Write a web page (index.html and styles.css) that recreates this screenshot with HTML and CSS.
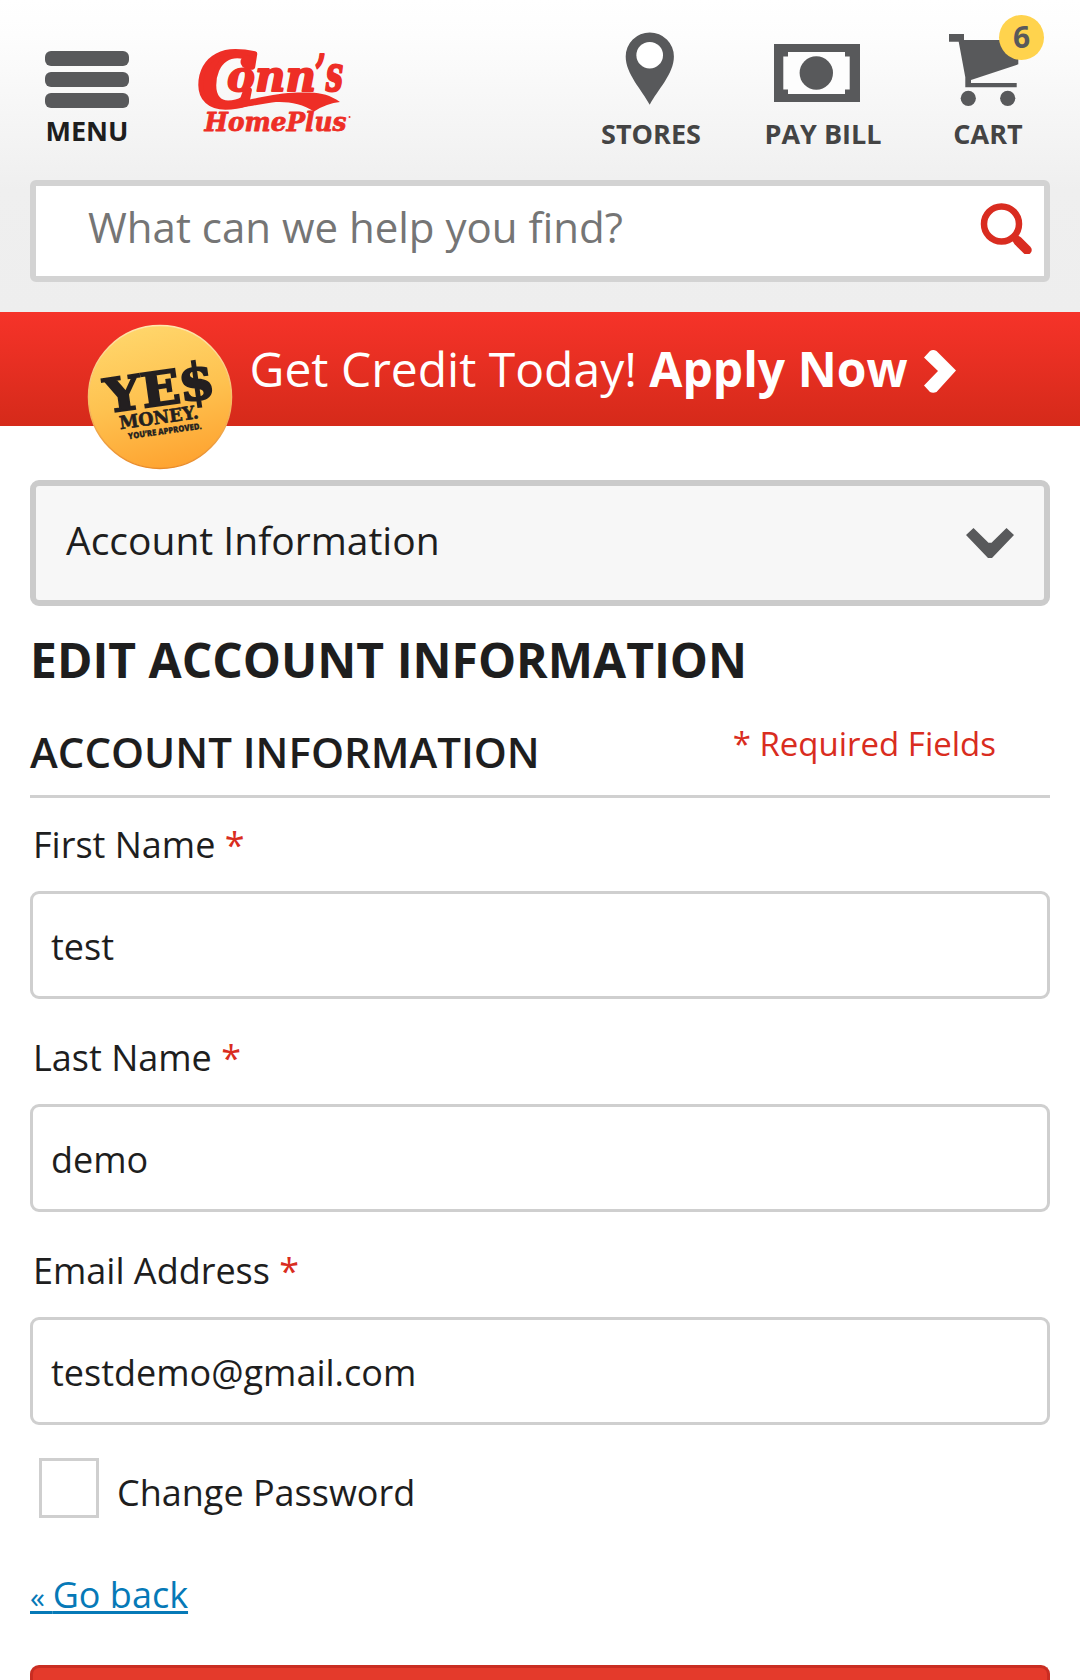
FILE: index.html
```html
<!DOCTYPE html>
<html lang="en">
<head>
<meta charset="utf-8">
<title>Edit Account Information</title>
<link rel="stylesheet" href="styles.css">
</head>
<body>
<header class="header">
  <div class="topbar">
    <a class="menu">
      <span class="bars"><span class="bar"></span><span class="bar"></span><span class="bar"></span></span>
      <span class="menu-label">MENU</span>
    </a>
    <svg class="logo" width="190" height="105" viewBox="0 0 190 105" fill="#ee2e26" stroke="#ee2e26" stroke-linejoin="round">
      <text class="logo-script" x="18" y="70.500" font-size="82" stroke-width="5" textLength="56" lengthAdjust="spacingAndGlyphs">C</text>
      <circle cx="67" cy="27" r="6.500" stroke="none"/>
      <text class="logo-slab" x="47" y="55.500" font-size="43" stroke-width="1.800" textLength="89" lengthAdjust="spacingAndGlyphs">onn</text>
      <text class="logo-slab" x="135" y="55.500" font-size="50" stroke-width="2" textLength="28" lengthAdjust="spacingAndGlyphs">’s</text>
      <path stroke="none" d="M28 64C40 72 62 66 82 62C100 58 114 57 130 57.500C142 58 150 60 160 67Q147 68 134 76.500C122 68.500 106 66 92 67.500C76 69.500 64 73.500 46 73.500Q34 73 28 64Z"/>
      <text class="logo-slab" x="24.500" y="95.500" font-size="25.500" stroke-width=".8" textLength="142" lengthAdjust="spacingAndGlyphs">HomePlus</text>
      <circle cx="169.500" cy="82" r="1" stroke="none"/>
    </svg>
    <nav class="links">
      <a class="link link-stores">
        <svg width="100" height="119" viewBox="601 0 100 119"><path fill="#58595b" d="M649.700 104.700C642 90 625.700 74 625.700 56.500A24 24 0 0 1 673.900 56.500C673.900 74 657.500 90 649.700 104.700Z"/><circle cx="649.700" cy="55.200" r="13.300" fill="#fff"/></svg>
        <span>STORES</span>
      </a>
      <a class="link link-pay">
        <svg width="120" height="119" viewBox="763 0 120 119"><path fill="#58595b" d="M774 44H860V102H774Z"/><path fill="#fdfdfd" d="M788 52H845V56.500H849.700V89.500H845V94H788V89.500H783.300V56.500H788Z"/><circle cx="816.300" cy="73" r="16.700" fill="#58595b"/></svg>
        <span>PAY BILL</span>
      </a>
      <a class="link link-cart">
        <svg width="100" height="119" viewBox="938 0 100 119" fill="#58595b"><path d="M949 34H964V40H1018.300V64.300L971 80V83H1016.700V87.300H965.300V77.300L958.700 41.700H949Z"/><circle cx="968.300" cy="98.300" r="7.600"/><circle cx="1007.700" cy="98.300" r="7.600"/></svg>
        <span>CART</span>
        <b class="badge">6</b>
      </a>
    </nav>
  </div>
  <div class="search">
    <span>What can we help you find?</span>
    <svg width="54" height="54" viewBox="979 200 54 54" fill="none" stroke="#d92c20"><circle cx="1001.500" cy="224" r="17.500" stroke-width="6.500"/><path d="M1014 237L1023 246" stroke-width="8"/><path d="M1018 241L1027 250" stroke-width="9.500" stroke-linecap="round"/></svg>
  </div>
</header>
<div class="banner">
  <svg class="coin" width="146" height="146" viewBox="0 0 146 146">
    <defs><linearGradient id="gold" x1=".35" y1="0" x2=".6" y2="1"><stop offset="0" stop-color="#ffd66b"/><stop offset=".5" stop-color="#fec250"/><stop offset="1" stop-color="#fea330"/></linearGradient>
    <linearGradient id="rim" x1="0" y1="0" x2="0" y2="1"><stop offset="0" stop-color="#ffe6ae"/><stop offset=".6" stop-color="#f4b65a"/><stop offset="1" stop-color="#e98b2a"/></linearGradient></defs>
    <circle cx="73" cy="73" r="71.500" fill="url(#gold)" stroke="url(#rim)" stroke-width="1.500"/>
    <g fill="#231f20" stroke="#231f20" transform="rotate(-8 30 90)">
      <text class="coin-slab" x="20" y="87.500" font-size="47" stroke-width="1.800" textLength="76" lengthAdjust="spacingAndGlyphs">YE</text>
      <text class="coin-slab" x="95" y="87" font-size="51" stroke-width="1.800" textLength="36" lengthAdjust="spacingAndGlyphs">$</text>
      <text class="coin-slab" x="31" y="105.500" font-size="18" stroke-width=".6" textLength="80" lengthAdjust="spacingAndGlyphs">MONEY.</text>
      <text class="coin-sans" x="38" y="116.500" font-size="8.500" stroke-width=".3" textLength="74" lengthAdjust="spacingAndGlyphs">YOU’RE APPROVED.</text>
    </g>
  </svg>
  <span class="banner-text">Get Credit Today! <b>Apply Now</b></span>
  <svg width="32" height="43" viewBox="0 0 32 43"><path fill="#fff" d="M0 7.500L6 1Q9 -1 12.500 1L32 20.500L12.500 42Q9 43.500 6 42L0 35.500L14 21Z"/></svg>
</div>
<main class="content">
  <div class="select">
    <span>Account Information</span>
    <svg width="48" height="30" viewBox="0 0 48 30"><path fill="#58595b" d="M0 7L7.500 0L22.500 14.700H25.500L40.500 0L48 7L26 30H22Z"/></svg>
  </div>
  <h1 class="title">EDIT ACCOUNT INFORMATION</h1>
  <div class="section-head">
    <h2 class="subtitle">ACCOUNT INFORMATION</h2>
    <p class="required">* Required Fields</p>
  </div>
  <form class="form">
    <div class="field"><label class="label">First Name <em>*</em></label><div class="input">test</div></div>
    <div class="field"><label class="label">Last Name <em>*</em></label><div class="input">demo</div></div>
    <div class="field"><label class="label">Email Address <em>*</em></label><div class="input">testdemo@gmail.com</div></div>
    <div class="check"><span class="box"></span><span class="check-label">Change Password</span></div>
    <a class="back"><small>« </small>Go back</a>
    <div class="save"></div>
  </form>
</main>
</body>
</html>
```
FILE: styles.css
```css
* { box-sizing: border-box; }
body {
  margin: 0;
  height: 1680px;
  overflow: hidden;
  background: #fff;
  color: #1e1e1e;
  font-family: "Open Sans", sans-serif;
}
svg { display: block; flex: none; }

.header {
  height: 312px;
  padding: 0 30px;
  background: linear-gradient(#fff 0, #fdfdfd 36px, #efefef 190px, #eee 312px);
}
.topbar { display: flex; height: 180px; }
.menu { display: flex; flex-direction: column; width: 84px; margin: 51px 0 0 15px; align-items: center; }
.bars { display: flex; flex-direction: column; gap: 6px; width: 84px; }
.bar { height: 15px; border-radius: 6px; background: #58595b; }
.menu-label { margin-top: 8px; line-height: 30px; font-size: 27px; font-weight: 700; }
.logo { margin: 35px 0 0 51px; overflow: visible; }
.logo-script { font-family: "Liberation Serif", serif; font-weight: 700; font-style: italic; }
.logo-slab { font-family: "DejaVu Serif", serif; font-weight: 700; font-style: italic; }
.links { display: flex; margin-left: 231px; }
.link { position: relative; display: flex; flex-direction: column; align-items: center; color: #444; font-size: 27px; font-weight: 700; line-height: 30px; white-space: nowrap; }
.link-stores { width: 100px; }
.link-pay { width: 120px; margin-left: 62px; }
.link-cart { width: 100px; margin-left: 55px; }
.badge {
  position: absolute; left: 61px; top: 15px; width: 45px; height: 45px;
  border-radius: 50%; background: #ffd34d; color: #58595b;
  font-size: 30px; font-weight: 700; line-height: 44px; text-align: center;
}
.search {
  display: flex; justify-content: space-between; height: 102px; padding: 14px 11px 0 52px;
  border: 6px solid #d3d3d3; border-radius: 6px; background: #fff;
  color: #757575; font-size: 42px; line-height: 54px;
}
.banner {
  position: relative; display: flex; height: 114px; padding: 38px 0 0 249.500px;
  background: linear-gradient(#f63329, #d52a1a); color: #fff;
}
.banner-text { margin-right: 17px; font-size: 48px; line-height: 38px; white-space: nowrap; }
.coin { position: absolute; left: 87px; top: 12px; }
.coin-slab { font-family: "DejaVu Serif", serif; font-weight: 700; }
.coin-sans { font-family: "Open Sans", sans-serif; font-weight: 800; }

.content { padding: 54px 30px 0; }
.select {
  display: flex; justify-content: space-between; height: 126px; padding: 42px 30px 0;
  border: 6px solid #cbcbcb; border-radius: 9px; background: #f7f7f7;
  font-size: 39px; line-height: 24px;
}
.title { margin: 24px 0 0; font-size: 48px; font-weight: 700; line-height: 60px; white-space: nowrap; }
.section-head {
  display: flex; justify-content: space-between; height: 108px; padding: 32px 54px 0 0;
  border-bottom: 3px solid #d0d0d0;
}
.subtitle { margin: 3px 0 0; font-size: 42px; font-weight: 600; line-height: 54px; }
.required { margin: 0; color: #d92c20; font-size: 33px; line-height: 44px; }
.form { display: flex; flex-direction: column; padding-top: 23px; font-size: 36px; }
.field { height: 213px; }
.label { display: block; padding-left: 3px; line-height: 48px; }
.label em { color: #d92c20; font-style: normal; }
.input {
  height: 108px; margin-top: 22px; padding: 2px 18px 0;
  border: 3px solid #cfcfcf; border-radius: 9px; line-height: 102px;
}
.check { display: flex; height: 60px; margin: -2px 0 0 9px; gap: 18px; }
.box { width: 60px; height: 60px; border: 3px solid #cfcfcf; }
.check-label { padding-top: 5px; line-height: 60px; }
.back {
  align-self: flex-start; height: 48px; margin-top: 53px; color: #0679b7; line-height: 48px;
  text-decoration: underline; text-decoration-thickness: 3px; text-underline-offset: 3px;
  text-decoration-skip-ink: none;
}
.back small { font-size: 30px; line-height: 1; }
.save { height: 15px; margin-top: 46px; border: 3px solid #c92d22; border-bottom: 0; border-radius: 9px 9px 0 0; background: #e43a2b; }
```
